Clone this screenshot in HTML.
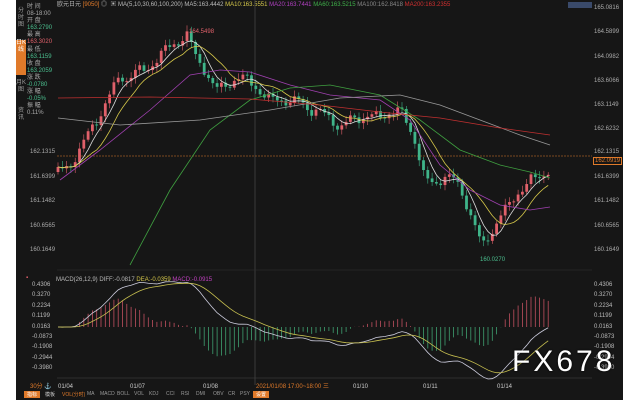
<!DOCTYPE html>
<html><head><meta charset="utf-8">
<style>
html,body{margin:0;padding:0;background:#fff;}
#w{position:relative;width:640px;height:400px;overflow:hidden;background:#fff;font-family:"Liberation Sans","Noto Sans CJK SC",sans-serif;}
#bg{position:absolute;left:16px;top:0;width:607px;height:400px;background:#161616;}
.t{position:absolute;font-size:6px;color:#bbb;white-space:nowrap;line-height:7px;}
.ax{position:absolute;left:594px;font-size:6px;color:#aaa;}
.side{position:absolute;left:16px;width:10px;font-size:6px;color:#999;text-align:center;line-height:7px;}
.btn{position:absolute;top:391px;font-size:5px;color:#999;}
</style></head><body>
<div id="w">
<div id="bg"></div>
<div class="side" style="top:8px;height:30px">分时图</div>
<div class="side" style="top:40px;height:35px;background:#e07a2a;color:#fff">日K线</div>
<div class="side" style="top:80px">月K图</div>
<div class="side" style="top:108px">资讯</div>
<div class="t" style="left:27px;top:4px;line-height:7.1px;color:#aaa">时 间<br>08-18:00<br>开 盘<br><span style="color:#4bbf8f">163.2790</span><br>最 高<br><span style="color:#e0606a">163.3020</span><br>最 低<br><span style="color:#4bbf8f">163.1159</span><br>收 盘<br><span style="color:#4bbf8f">163.2059</span><br>涨 跌<br><span style="color:#4bbf8f">-0.0780</span><br>涨 幅<br><span style="color:#4bbf8f">-0.05%</span><br>振 幅<br>0.11%</div>
<div class="t" style="left:57px;top:2px">欧元日元 <span style="color:#e07a2a">[9050]</span> ◎ &nbsp;▣ MA(5,10,30,60,100,200) MA5:163.4442 <span style="color:#d6c84a">MA10:163.5551</span> <span style="color:#b040c0">MA20:163.7441</span> <span style="color:#3fb04a">MA60:163.5215</span> <span style="color:#888">MA100:162.8418</span> <span style="color:#d03030">MA200:163.2355</span></div>
<div style="position:absolute;left:568px;top:2px;width:24px;height:6px;background:#3a4a6a"></div>
<svg id="s" width="640" height="400" style="position:absolute;left:0;top:0"></svg>
<div class="ax" style="top:5px">165.0816</div>
<div class="ax" style="top:29px">164.5899</div>
<div class="ax" style="top:54px">164.0982</div>
<div class="ax" style="top:78px">163.6066</div>
<div class="ax" style="top:102px">163.1149</div>
<div class="ax" style="top:126px">162.6232</div>
<div class="ax" style="top:149px">162.1315</div>
<div class="ax" style="top:157px;left:593px;color:#e07a2a;border:1px solid #e07a2a;padding:0 1px">162.0919</div>
<div class="ax" style="top:174px">161.6399</div>
<div class="ax" style="top:198px">161.1482</div>
<div class="ax" style="top:223px">160.6565</div>
<div class="ax" style="top:247px">160.1649</div>
<div class="t" style="left:30px;top:149px;color:#aaa">162.1315</div>
<div class="t" style="left:30px;top:174px;color:#aaa">161.6399</div>
<div class="t" style="left:30px;top:198px;color:#aaa">161.1482</div>
<div class="t" style="left:30px;top:223px;color:#aaa">160.6565</div>
<div class="t" style="left:30px;top:247px;color:#aaa">160.1649</div>
<div class="t" style="left:189px;top:29px;color:#e0606a">164.5498</div>
<div class="t" style="left:480px;top:257px;color:#4bbf8f">160.0270</div>
<div class="t" style="left:26px;top:275px;color:#e0606a">▪</div>
<div class="t" style="left:56px;top:277px">MACD(26,12,9) DIFF:-0.0817 <span style="color:#d6c84a">DEA:-0.0359</span> <span style="color:#c040c0">MACD:-0.0915</span></div>
<div id="ml"></div>
<div class="t" style="left:30px;top:384px;color:#e07a2a">30分 ⚓</div>
<div class="t" style="left:58px;top:384px;color:#ccc">01/04</div>
<div class="t" style="left:130px;top:384px;color:#ccc">01/07</div>
<div class="t" style="left:203px;top:384px;color:#ccc">01/08</div>
<div class="t" style="left:256px;top:384px;color:#e07a2a">2021/01/08 17:00~18:00 三</div>
<div class="t" style="left:353px;top:384px;color:#ccc">01/10</div>
<div class="t" style="left:423px;top:384px;color:#ccc">01/11</div>
<div class="t" style="left:497px;top:384px;color:#ccc">01/14</div>
<div class="btn" style="left:24px;background:#e07a2a;color:#fff;padding:0 3px">指标</div>
<div class="btn" style="left:45px;color:#ccc">模板</div>
<div class="btn" style="left:62px;color:#e07a2a">VOL(分时)</div>
<div class="btn" style="left:87px">MA</div><div class="btn" style="left:100px">MACD</div><div class="btn" style="left:117px">BOLL</div><div class="btn" style="left:134px">VOL</div><div class="btn" style="left:149px">KDJ</div><div class="btn" style="left:166px">CCI</div><div class="btn" style="left:181px">RSI</div><div class="btn" style="left:196px">DMI</div><div class="btn" style="left:213px">OBV</div><div class="btn" style="left:228px">CR</div><div class="btn" style="left:240px">PSY</div>
<div class="btn" style="left:253px;background:#e07a2a;color:#fff;padding:0 3px">设置</div>
<div style="position:absolute;left:512px;top:345px;font-size:30px;color:#fff;letter-spacing:3px;font-family:'Liberation Sans',sans-serif;text-shadow:0 0 2px #000">FX678</div>
</div>
<script>
var s=document.getElementById('s'),h='';
function ln(x1,y1,x2,y2,c,w,d){h+='<line x1="'+x1+'" y1="'+y1+'" x2="'+x2+'" y2="'+y2+'" stroke="'+c+'" stroke-width="'+(w||1)+'"'+(d?' stroke-dasharray="'+d+'"':'')+'/>';}
function pl(p,c,w){h+='<polyline fill="none" stroke="'+c+'" stroke-width="'+(w||0.8)+'" points="'+p.map(function(a){return a.join(',')}).join(' ')+'"/>';}
ln(255,0,255,385,'#444',0.8);
ln(57,270,592,270,'#333',0.5);
ln(57,378,592,378,'#444',0.5);
ln(57,156,592,156,'#e07a2a',0.6,'2,1');
var K=[[58,172],[70,165],[80,150],[90,130],[100,115],[110,95],[120,75],[128,80],[135,72],[145,70],[155,62],[165,50],[172,45],[180,40],[188,35],[195,55],[205,70],[215,90],[225,85],[235,80],[245,78],[255,85],[262,95],[270,100],[280,98],[290,103],[300,100],[310,110],[320,112],[330,118],[340,128],[350,120],[360,118],[370,115],[380,118],[390,112],[400,110],[405,120],[415,140],[425,180],[435,185],[445,175],[455,180],[465,200],[475,225],[482,248],[490,235],[500,215],[510,205],[520,190],[530,180],[540,178],[548,170],[552,155]];
function py(x){for(var i=1;i<K.length;i++){if(x<=K[i][0]){var a=K[i-1],b=K[i];return a[1]+(b[1]-a[1])*(x-a[0])/(b[0]-a[0]);}}return K[K.length-1][1];}
var C=[],X=[],prev=py(58);
for(var x=58;x<=552;x+=4.3){var c=py(x)+Math.sin(x*1.7)*4+Math.sin(x*0.53)*2;X.push(x);C.push(c);
 var o=prev,up=c<o,hi=Math.min(o,c)-2-Math.abs(Math.sin(x*3.1))*4,lo=Math.max(o,c)+2+Math.abs(Math.cos(x*2.3))*4;
 var col=up?'#e0606a':'#3fb489';ln(x,hi,x,lo,col,0.6);
 h+='<rect x="'+(x-1.4)+'" y="'+Math.min(o,c)+'" width="2.8" height="'+Math.max(1,Math.abs(o-c))+'" fill="'+col+'"/>';prev=c;}
function sma(n){var r=[];for(var i=0;i<C.length;i++){var a=0,k=0;for(var j=Math.max(0,i-n+1);j<=i;j++){a+=C[j];k++;}r.push([X[i],a/k]);}return r;}
pl(sma(5),'#ddd');pl(sma(10),'#d6c84a');
pl([[60,180],[100,150],[150,110],[190,75],[220,70],[250,72],[290,85],[330,95],[380,100],[410,120],[440,165],[470,190],[500,205],[530,210],[550,207]],'#a040b0');
pl([[130,265],[170,190],[210,130],[250,100],[290,88],[330,85],[380,95],[420,120],[460,150],[500,165],[530,172],[550,178]],'#3fa040');
pl([[58,118],[120,125],[200,120],[270,110],[340,98],[400,95],[440,105],[480,120],[520,135],[550,145]],'#999');
pl([[58,98],[150,97],[250,99],[320,105],[380,112],[440,118],[500,128],[550,135]],'#c03030');
function ema(a,n){var k=2/(n+1),r=[a[0]];for(var i=1;i<a.length;i++)r.push(a[i]*k+r[i-1]*(1-k));return r;}
var e12=ema(C,12),e26=ema(C,26),d=[],de;for(var i=0;i<C.length;i++)d.push(e26[i]-e12[i]);de=ema(d,9);
var m=0;d.forEach(function(v){m=Math.max(m,Math.abs(v));});var sc=52/m,z=327;
for(var i=0;i<C.length;i++){var v=(d[i]-de[i])*2*sc;ln(X[i],z,X[i],z-v,v>0?'#c05060':'#3fa070',0.8);}
pl(d.map(function(v,i){return[X[i],z-v*sc]}),'#ccd');pl(de.map(function(v,i){return[X[i],z-v*sc]}),'#c8c050');
s.innerHTML=h;
var lab=['0.4306','0.3270','0.2234','0.1199','0.0163','-0.0873','-0.1908','-0.2944','-0.3980'],t='';
lab.forEach(function(l,i){var y=282+i*10.4;t+='<div class="t" style="left:32px;top:'+y+'px">'+l+'</div><div class="t" style="left:594px;top:'+y+'px">'+l+'</div>';});
document.getElementById('ml').innerHTML=t;
</script>
</body></html>
